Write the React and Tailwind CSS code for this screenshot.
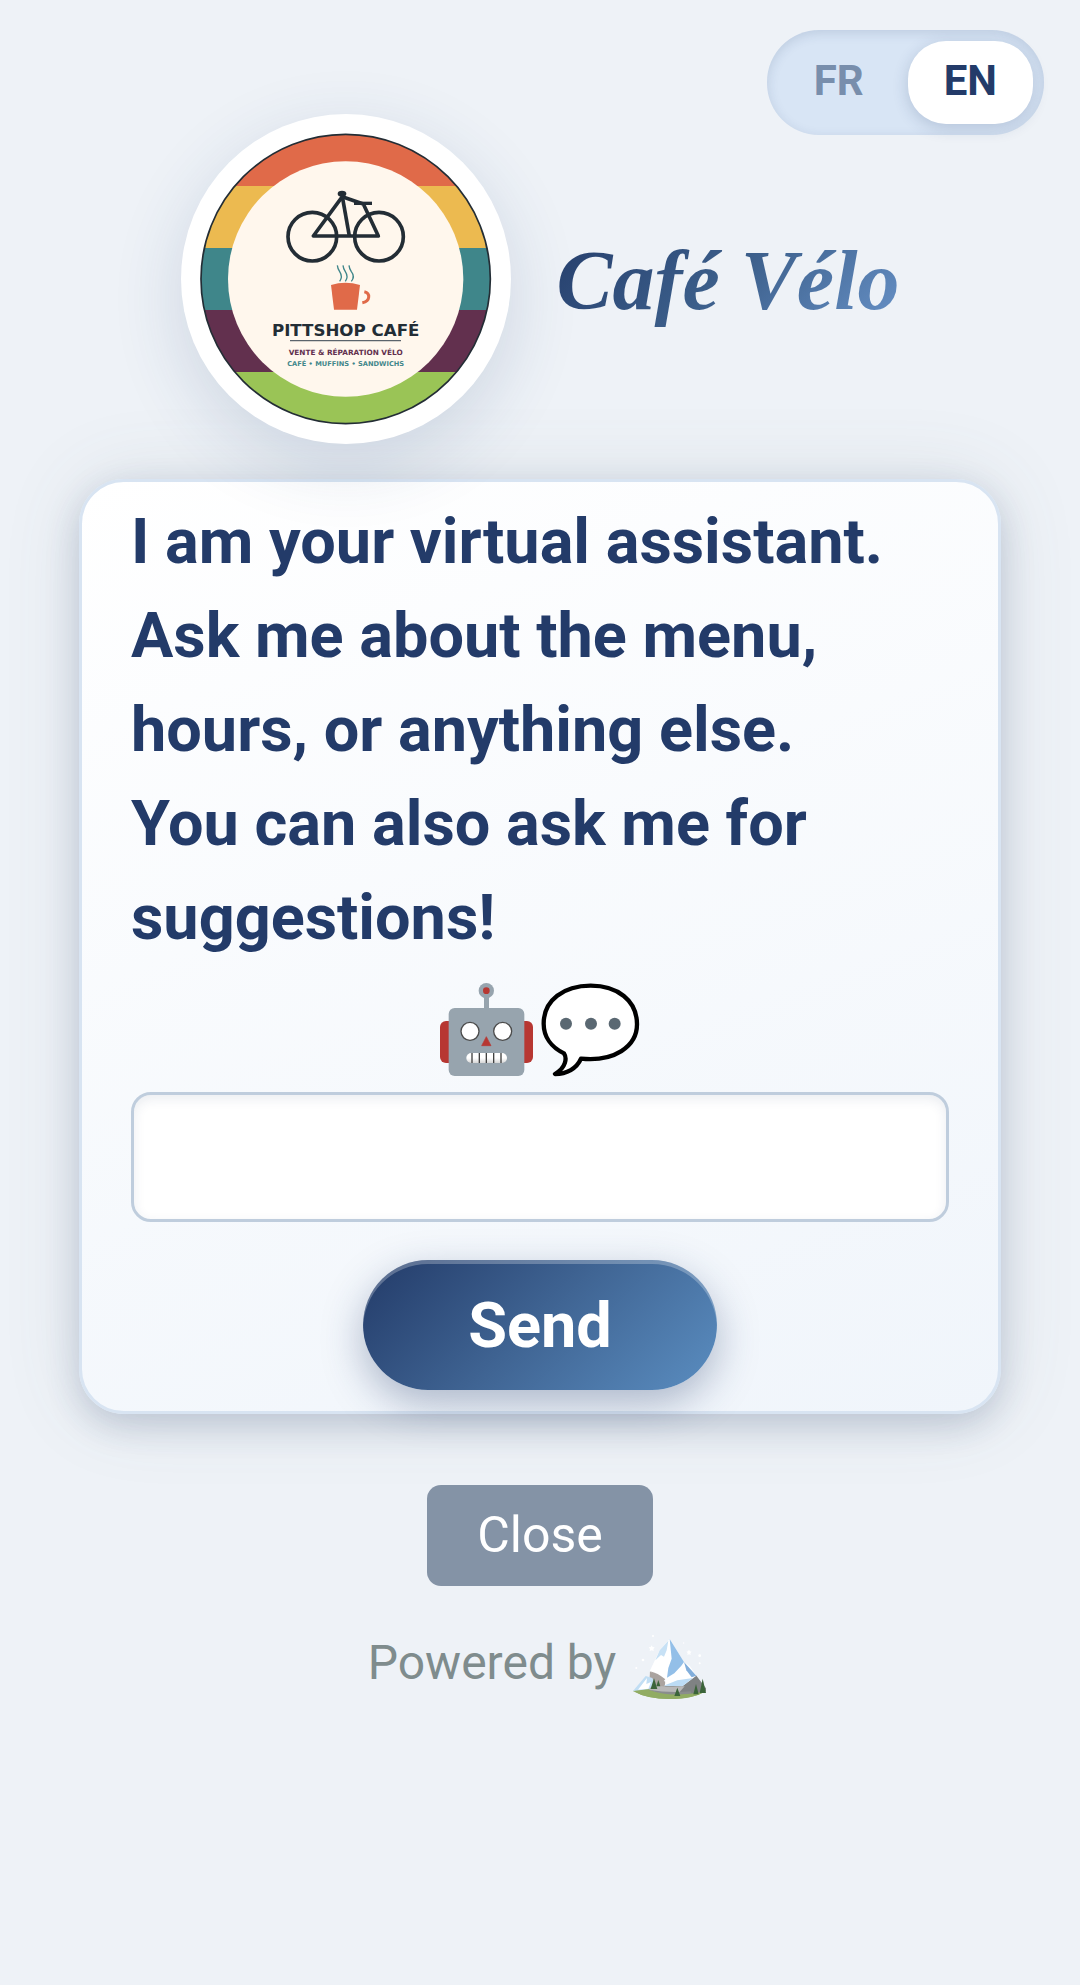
import React, { useState } from "react";

function Logo() {
  return (
    <svg viewBox="33 42 990 990" className="block size-full" role="img" aria-label="Pittshop Café">
      <defs>
        <clipPath id="disc">
          <circle cx="527" cy="537" r="434" />
        </clipPath>
      </defs>
      <g clipPath="url(#disc)">
        <rect x="90" y="90" width="880" height="168" fill="#e06a49" />
        <rect x="90" y="258" width="880" height="186" fill="#ecba50" />
        <rect x="90" y="444" width="880" height="186" fill="#3f868a" />
        <rect x="90" y="630" width="880" height="186" fill="#62304e" />
        <rect x="90" y="816" width="880" height="170" fill="#9ac456" />
      </g>
      <circle cx="527" cy="537" r="434" fill="none" stroke="#232d35" strokeWidth="5" />
      <circle cx="527" cy="537" r="353" fill="#fff7ed" />
      <g fill="none" stroke="#232d35" strokeWidth="11" strokeLinecap="butt" strokeLinejoin="round">
        <circle cx="427" cy="410" r="73" />
        <circle cx="627" cy="410" r="73" />
        <path d="M430 408L517 290L580 312L625 408Z" />
        <path d="M517 290L538 408" />
        <path d="M552 310H606" strokeWidth="10" />
      </g>
      <ellipse cx="516" cy="281" rx="13" ry="9" fill="#232d35" />
      <g fill="none" stroke="#3f868a" strokeWidth="4">
        <path d="M502 496Q503 506 509 515Q519 530 509 544" />
        <path d="M519 496Q520 506 526 515Q536 530 526 544" />
        <path d="M537 496Q538 506 544 515Q556 530 544 544" />
      </g>
      <path d="M483 555Q526 542 570 555L561 629H492Z" fill="#e06a49" />
      <path d="M583 575C601 579 602 603 577 608" fill="none" stroke="#e06a49" strokeWidth="9" />
      <g fontFamily="DejaVu Sans, sans-serif" fontWeight="bold" textAnchor="middle">
        <text x="527" y="708" fontSize="50" fill="#232d35">PITTSHOP CAFÉ</text>
        <text x="527" y="766" fontSize="22" fill="#62304e">VENTE &amp; RÉPARATION VÉLO</text>
        <text x="527" y="798" fontSize="20" fill="#3f868a">CAFÉ • MUFFINS • SANDWICHS</text>
      </g>
      <path d="M360 722H693" stroke="#5b646c" strokeWidth="4" />
    </svg>
  );
}

function Robot() {
  return (
    <svg viewBox="60 60 288 288" className="size-24" aria-hidden="true">
      <defs>
        <linearGradient id="teeth" x1="0" y1="0" x2="0" y2="1">
          <stop offset="0.5" stopColor="#fff" />
          <stop offset="1" stopColor="#d5d5d5" />
        </linearGradient>
      </defs>
      <rect x="63" y="180" width="50" height="126" rx="18" fill="#b73732" />
      <rect x="292" y="180" width="50" height="126" rx="18" fill="#b73732" />
      <rect x="195" y="100" width="15" height="50" fill="#97a4ae" />
      <circle cx="202" cy="89" r="23" fill="#97a4ae" />
      <circle cx="202" cy="89" r="10" fill="#b73732" />
      <rect x="89" y="141" width="227" height="204" rx="18" fill="#97a4ae" />
      <circle cx="153" cy="211" r="27" fill="#fff" stroke="#4b4b4b" strokeWidth="4" />
      <circle cx="251" cy="211" r="27" fill="#fff" stroke="#4b4b4b" strokeWidth="4" />
      <path d="M202 227L216 254H188Z" fill="#b73732" stroke="#b73732" strokeWidth="2" strokeLinejoin="round" />
      <rect x="142" y="276" width="122" height="30" rx="15" fill="url(#teeth)" />
      <path d="M159 276V306M181 276V306M202 276V306M224 276V306M246 276V306" stroke="#414141" strokeWidth="4" />
    </svg>
  );
}

function SpeechBubble() {
  return (
    <svg viewBox="369 60 300 288" className="h-24 w-[100px]" aria-hidden="true">
      <path
        d="M518 74C438 74 377 117 377 188C377 227 400 259 438 277C447 291 445 319 411 339C446 339 476 323 489 293C588 303 657 257 657 190C657 118 598 74 518 74Z"
        fill="#fff"
        stroke="#000"
        strokeWidth="13"
        strokeLinejoin="round"
      />
      <circle cx="444" cy="188" r="18" fill="#5a6872" />
      <circle cx="519" cy="188" r="18" fill="#5a6872" />
      <circle cx="590" cy="188" r="18" fill="#5a6872" />
    </svg>
  );
}

function Mountain() {
  return (
    <svg viewBox="39 42 228 195" className="h-[65px] w-[76px]" role="img" aria-label="Mountain">
      <g fill="#fff">
        <path d="M98 76l3 5 6 1-4 5 1 6-6-2-6 2 1-6-4-5 6-1z" />
        <path d="M210 89l3 5 5 1-4 4 1 6-5-2-5 2 1-6-4-4 5-1z" />
        <circle cx="102" cy="48" r="3" />
        <circle cx="72" cy="120" r="4" />
        <circle cx="52" cy="144" r="3" />
        <circle cx="194" cy="69" r="2" />
        <circle cx="242" cy="107" r="4" />
        <circle cx="242" cy="130" r="3" />
      </g>
      <path d="M42 213Q90 192 150 194Q215 194 261 213Q224 237 152 237Q84 237 42 213Z" fill="#91ac63" />
      <path d="M93 154L127 170L148 200L90 208Z" fill="#aaa39f" />
      <path d="M136 196L190 184L231 166L261 205V214L215 224L150 216Z" fill="#7f8283" />
      <path d="M152 57L122 90L92 154L140 182L137 197L190 199L232 167L213 139L195 126Z" fill="#fff" />
      <path d="M152 57L195 126L187 137L166 160L144 173L148 144L158 116Z" fill="#93bfe8" />
      <path d="M195 126L232 167L218 172L202 151Z" fill="#82aedb" />
      <path d="M148 62L122 91L109 121L126 105L135 110L143 91Z" fill="#c7e1f5" />
      <path d="M134 197L175 181L222 174L190 199Z" fill="#bcdcf5" />
      <path d="M93 154Q116 159 139 178L133 183Q112 174 93 154Z" fill="#aaa39f" />
      <path d="M42 213L80 168L100 174L108 190L91 207Z" fill="#c1def4" />
      <path d="M57 209L84 174L82 192L96 186L88 206Z" fill="#fff" />
      <path d="M89 209L110 197Q153 201 197 199L180 218Q139 224 89 209Z" fill="#b8b8b8" />
      <path d="M88 209Q134 217 181 216L215 214L218 222Q145 230 88 209Z" fill="#8a8d8d" />
      <path d="M42 213Q92 226 149 224Q216 225 261 212Q224 237 152 237Q84 237 42 213Z" fill="#91ac63" />
      <g fill="#3b643a">
        <path d="M105 175L115 207H95Z" />
        <path d="M118 180L124 199H112Z" />
        <path d="M175 203L184 228H166Z" />
        <path d="M231 192L239 223H223Z" />
        <path d="M251 176L261 219H242Z" />
      </g>
    </svg>
  );
}

function LanguageToggle() {
  const [language, setLanguage] = useState("EN");
  return (
    <div
      className="absolute top-[30px] right-9 flex gap-2 rounded-[52px] bg-[#d8e5f5] p-[11px] shadow-[inset_0_3px_12px_rgba(35,59,105,0.15)]"
      role="group"
      aria-label="Language"
    >
      {["FR", "EN"].map((code) => (
        <button
          key={code}
          type="button"
          aria-pressed={language === code}
          onClick={() => setLanguage(code)}
          className={
            language === code
              ? "h-[83px] rounded-[38px] bg-white px-9 pb-1 text-[42px] leading-none font-bold text-[#233b69] shadow-[0_4px_16px_rgba(35,59,105,0.2)]"
              : "h-[83px] rounded-[38px] px-9 pb-1 text-[42px] leading-none font-bold text-[#788eac]"
          }
        >
          {code}
        </button>
      ))}
    </div>
  );
}

export default function App() {
  return (
    <div className="relative min-h-screen bg-[#eef2f7] font-[Roboto,sans-serif]">
      <LanguageToggle />
      <header className="flex items-center justify-center gap-[46px] pt-[114px]">
        <div className="size-[330px] shrink-0 rounded-full bg-white shadow-[0_20px_70px_rgba(35,70,120,0.16)]">
          <Logo />
        </div>
        <h1 className="bg-linear-[135deg,#233b69,#3c5f8b_50%,#6a95cb] bg-clip-text pt-1 font-['Liberation_Serif',serif] text-[84px] leading-[120px] font-bold text-transparent italic">
          Café Vélo
        </h1>
      </header>

      <main className="mt-[35px] px-[79px]">
        <form
          onSubmit={(event) => event.preventDefault()}
          className="flex flex-col items-center rounded-[45px] border-3 border-[#d8e4f2] bg-linear-[160deg,#ffffff,#f0f5fb] px-[49px] pt-[13px] pb-[21px] shadow-[0_12px_34px_rgba(35,59,105,0.2),0_0_80px_rgba(80,100,110,0.12)]"
        >
          <label htmlFor="message" className="w-full text-[63px] leading-[94px] font-bold text-[#233b69]">
            I am your virtual assistant.
            <br />
            Ask me about the menu, hours, or anything else.
            <br />
            You can also ask me for suggestions!
          </label>
          <div className="mt-4 flex gap-[6px]">
            <Robot />
            <SpeechBubble />
          </div>
          <input
            id="message"
            type="text"
            className="mt-[15px] h-[130px] w-full rounded-[20px] border-3 border-[#bfcddd] bg-white px-8 text-5xl text-[#233b69] shadow-[inset_0_4px_12px_rgba(35,59,105,0.09)] outline-none"
          />
          <button
            type="submit"
            className="mt-[38px] h-[130px] w-[354px] rounded-full bg-linear-[135deg,#233b69,#406594_50%,#5a8dc0] text-[63px] leading-none font-bold text-white shadow-[0_14px_40px_rgba(35,59,105,0.34),inset_0_4px_0_rgba(255,255,255,0.25)]"
          >
            Send
          </button>
        </form>
      </main>

      <footer className="mt-[71px] flex flex-col items-center gap-12">
        <button type="button" className="h-[101px] w-[226px] rounded-[14px] bg-[#8493a6] pb-[2px] text-[50px] leading-none text-white">
          Close
        </button>
        <p className="flex items-start gap-4 pr-1 text-[48px] leading-[57px] text-[#7f8c8d]">
          Powered by <Mountain />
        </p>
      </footer>
    </div>
  );
}
